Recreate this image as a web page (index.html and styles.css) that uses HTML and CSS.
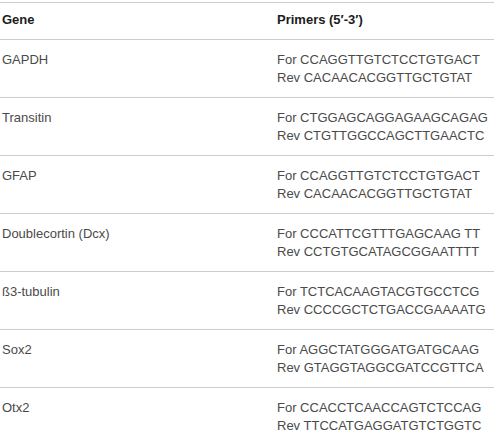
FILE: index.html
```html
<!DOCTYPE html>
<html>
<head>
<meta charset="utf-8">
<link rel="stylesheet" href="styles.css">
</head>
<body>
<table class="primers">
  <thead>
    <tr><th class="gene">Gene</th><th>Primers (5′-3′)</th></tr>
  </thead>
  <tbody>
    <tr><td class="gene">GAPDH</td><td>For CCAGGTTGTCTCCTGTGACT<br>Rev CACAACACGGTTGCTGTAT</td></tr>
    <tr><td class="gene">Transitin</td><td>For CTGGAGCAGGAGAAGCAGAG<br>Rev CTGTTGGCCAGCTTGAACTC</td></tr>
    <tr><td class="gene">GFAP</td><td>For CCAGGTTGTCTCCTGTGACT<br>Rev CACAACACGGTTGCTGTAT</td></tr>
    <tr><td class="gene">Doublecortin (Dcx)</td><td>For CCCATTCGTTTGAGCAAG TT<br>Rev CCTGTGCATAGCGGAATTTT</td></tr>
    <tr><td class="gene">ß3-tubulin</td><td>For TCTCACAAGTACGTGCCTCG<br>Rev CCCCGCTCTGACCGAAAATG</td></tr>
    <tr><td class="gene">Sox2</td><td>For AGGCTATGGGATGATGCAAG<br>Rev GTAGGTAGGCGATCCGTTCA</td></tr>
    <tr><td class="gene">Otx2</td><td>For CCACCTCAACCAGTCTCCAG<br>Rev TTCCATGAGGATGTCTGGTC</td></tr>
  </tbody>
</table>
</body>
</html>
```
FILE: styles.css
```css
html, body {
  margin: 0;
  padding: 0;
  background: #ffffff;
}
body {
  padding-top: 2px;
  font-family: "Liberation Sans", Arial, sans-serif;
  font-size: 13px;
  line-height: 18px;
  color: #4a4a4a;
}
.primers {
  width: 494px;
  border-collapse: collapse;
  border-spacing: 0;
  table-layout: fixed;
}
.primers th,
.primers td {
  text-align: left;
  vertical-align: top;
  padding: 0 2px;
}
.primers th {
  font-weight: bold;
  color: #1c1c1c;
  padding-top: 8px;
  padding-bottom: 10px;
  border-top: 1px solid #cccccc;
}
.primers td {
  padding-top: 11px;
  padding-bottom: 10px;
  border-top: 1px solid #cccccc;
}
.primers tbody tr:last-child td {
  border-bottom: 1px solid #cccccc;
}
.primers .gene {
  width: 271px;
}
```
